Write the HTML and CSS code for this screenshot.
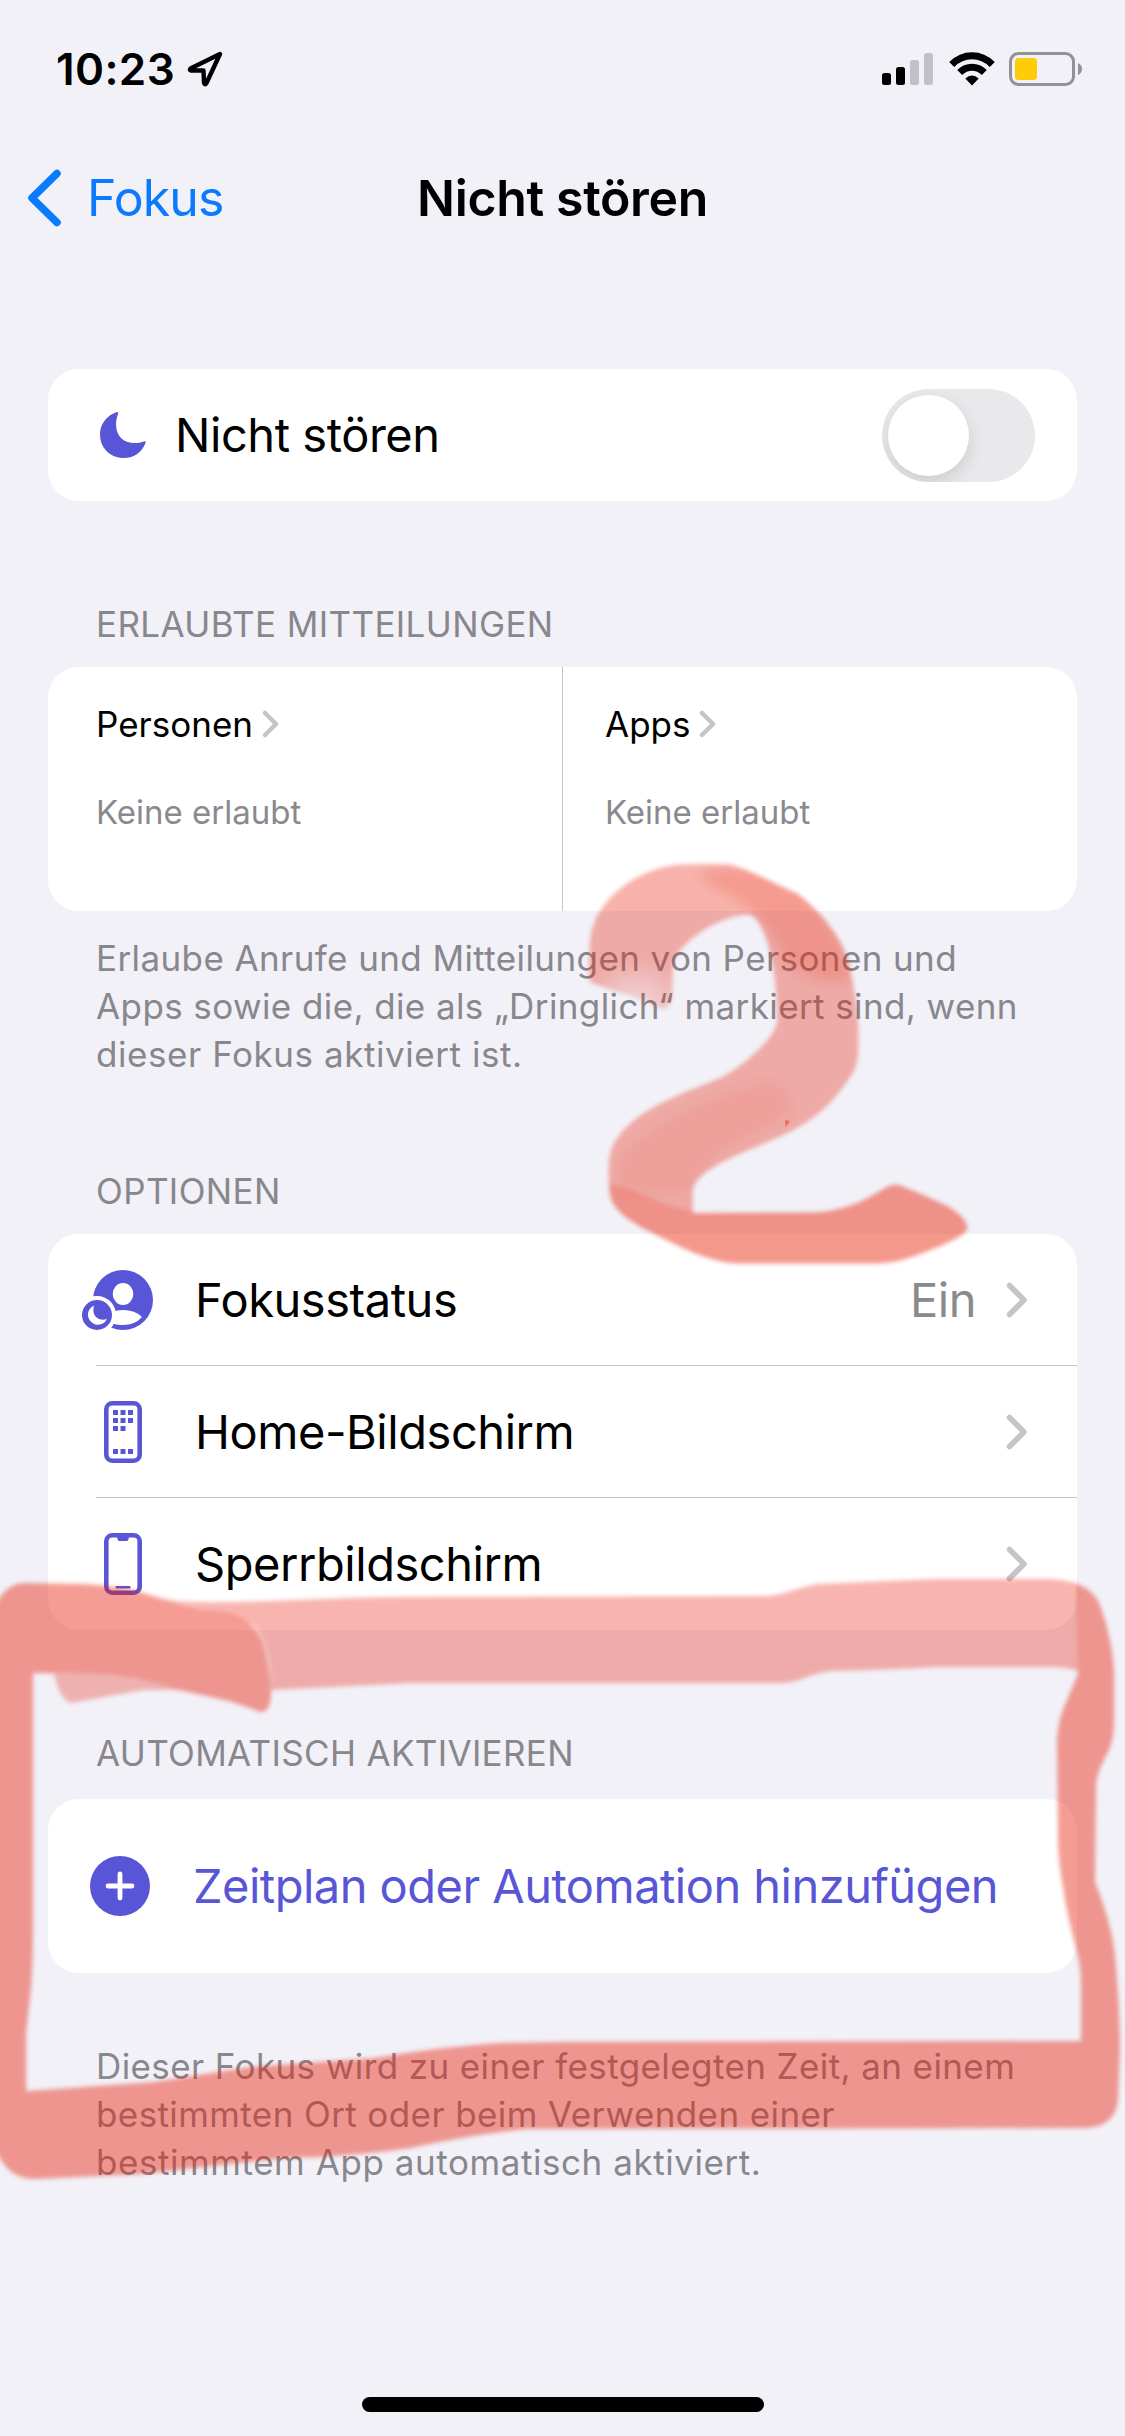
FILE: index.html
```html
<!DOCTYPE html>
<html lang="de">
<head>
<meta charset="utf-8">
<title>Nicht stören</title>
<link rel="stylesheet" href="styles.css">
</head>
<body>
<div class="screen">
  <header class="status">
    <span class="time">10:23</span>
    <svg class="location" width="36" height="36" viewBox="0 0 36 36"><path d="M33 3 3.500 17.500Q2 19 4 19.500H16.500L17 32Q18 34.500 19.500 32Z" fill="none" stroke="#000" stroke-width="4.400" stroke-linejoin="round"/></svg>
    <span class="status-icons">
      <svg width="52" height="34" viewBox="0 0 52 34"><rect y="21" width="9" height="12" rx="2.500"/><rect x="14" y="15" width="9" height="18" rx="2.500"/><rect x="28" y="8" width="9" height="25" rx="2.500" fill="#c1c0c6"/><rect x="42" y="1" width="9" height="32" rx="2.500" fill="#c1c0c6"/></svg>
      <svg class="wifi" width="46" height="34" viewBox="0 0 46 34"><g fill="none" stroke="#000" stroke-width="7"><path d="M2.700 12.500Q11.500 3.700 23 3.700T43.300 12.500"/><path d="M10.700 20.500Q16 15.200 23 15.200T35.300 20.500"/></g><path d="M16.300 26.500Q23 20.500 29.700 26.500L23 33.500Z"/></svg>
      <svg class="battery" width="74" height="34" viewBox="0 0 74 34"><rect x="1.500" y="1.500" width="63" height="31" rx="8" fill="none" stroke="#929197" stroke-width="3"/><rect x="6" y="6" width="22" height="22" rx="3.500" fill="#ffcc0a"/><path d="M69 11Q73 13 73 17T69 23Z" fill="#929197"/></svg>
    </span>
  </header>
  <nav class="nav">
    <a class="back"><svg width="36" height="58" viewBox="0 0 36 58"><path d="M30 4.500 5 29 30 53.500" fill="none" stroke="#0a7aff" stroke-width="7.500" stroke-linecap="round" stroke-linejoin="round"/></svg><span>Fokus</span></a>
    <h1 class="title">Nicht stören</h1>
  </nav>
  <main>
    <section class="card row focus-row">
      <svg width="48" height="48" viewBox="0 0 48 48"><path d="M18 1C8 4 1 13 1 23C1 37 11 47 25 47C35 47 43 41 46.500 32C47 30 46 30 44.500 30.500C42 31.500 39 32 36 32C24 32 17 25 17 13C17 9 18 6 19 3C19.500 1.500 19 .800 18 1Z" fill="#5856d6"/></svg>
      <span class="label">Nicht stören</span>
      <span class="toggle"><span class="knob"></span></span>
    </section>
    <h2 class="heading">ERLAUBTE MITTEILUNGEN</h2>
    <section class="card allowed">
      <div class="cell">
        <div class="cell-title"><span>Personen</span><svg width="17" height="28" viewBox="0 0 17 28"><path d="M3 3 14 14 3 25"/></svg></div>
        <div class="cell-note">Keine erlaubt</div>
      </div>
      <div class="cell">
        <div class="cell-title"><span>Apps</span><svg width="17" height="28" viewBox="0 0 17 28"><path d="M3 3 14 14 3 25"/></svg></div>
        <div class="cell-note">Keine erlaubt</div>
      </div>
    </section>
    <p class="note">Erlaube Anrufe und Mitteilungen von Personen und<br>Apps sowie die, die als „Dringlich“ markiert sind, wenn<br><span class="note-end">dieser Fokus aktiviert ist.</span></p>
    <h2 class="heading options-heading">OPTIONEN</h2>
    <section class="card options">
      <div class="row option">
        <svg width="64" height="64" viewBox="0 0 64 64"><circle cx="33" cy="32" r="30" fill="#5856d6"/><ellipse cx="33" cy="26" rx="10.300" ry="11" fill="#fff"/><path d="M14 49Q21 42 33 42Q45 42 52 49Q45 57 33 57Q22 57 14 52Z" fill="#fff"/><circle cx="7" cy="47" r="19" fill="#fff"/><circle cx="7" cy="47" r="15" fill="#5856d6"/><path d="M4 37.500A10 10 0 1 0 17 51Q10 53 6 49Q2 45 4 37.500Z" fill="#fff"/></svg>
        <span class="label">Fokusstatus</span><span class="value">Ein</span>
        <svg class="chev" width="22" height="36" viewBox="0 0 22 36"><path d="M3.500 3.500 18 18 3.500 32.500"/></svg>
      </div>
      <div class="row option">
        <svg width="64" height="64" viewBox="0 0 64 64" fill="#5856d6"><rect x="16.300" y="3.300" width="33.400" height="57.400" rx="6" fill="none" stroke="#5856d6" stroke-width="4.600"/><path d="M23 10h5v5h-5zM30.500 10h5v5h-5zM38 10h5v5h-5zM23 18h5v5h-5zM30.500 18h5v5h-5zM38 18h5v5h-5zM23 26h5v5h-5zM30.500 26h5v5h-5zM23 49h5v5h-5zM30.500 49h5v5h-5zM38 49h5v5h-5z"/></svg>
        <span class="label">Home-Bildschirm</span>
        <svg class="chev" width="22" height="36" viewBox="0 0 22 36"><path d="M3.500 3.500 18 18 3.500 32.500"/></svg>
      </div>
      <div class="row option">
        <svg width="64" height="64" viewBox="0 0 64 64" fill="#5856d6"><rect x="16.300" y="3.300" width="33.400" height="57.400" rx="6" fill="none" stroke="#5856d6" stroke-width="4.600"/><path d="M26 4h14Q38.500 5 38.500 7Q38.500 9 36.500 9H29.500Q27.500 9 27.500 7Q27.500 5 26 4Z"/><rect x="25.500" y="54" width="15" height="2.500" rx="1.200"/></svg>
        <span class="label">Sperrbildschirm</span>
        <svg class="chev" width="22" height="36" viewBox="0 0 22 36"><path d="M3.500 3.500 18 18 3.500 32.500"/></svg>
      </div>
    </section>
    <h2 class="heading auto-heading">AUTOMATISCH AKTIVIEREN</h2>
    <section class="card row add-row">
      <svg width="60" height="60" viewBox="0 0 60 60"><circle cx="30" cy="30" r="30" fill="#5856d6"/><path d="M30 18V42M18 30H42" stroke="#fff" stroke-width="4.800" stroke-linecap="round"/></svg>
      <span class="label">Zeitplan oder Automation hinzufügen</span>
    </section>
    <p class="note auto-note">Dieser Fokus wird zu einer festgelegten Zeit, an einem<br>bestimmten Ort oder beim Verwenden einer<br><span class="note-end">bestimmtem App automatisch aktiviert.</span></p>
  </main>
  <div class="home-indicator"></div>

  <!-- translucent red marker drawn over the screen -->
  <svg class="marker" width="1125" height="2436" viewBox="0 0 1125 2436" color-interpolation-filters="sRGB">
    <defs>
      <filter id="soft" x="-5%" y="-5%" width="110%" height="110%"><feGaussianBlur stdDeviation="2"/></filter>
      <filter id="edge" x="-10%" y="-10%" width="120%" height="120%"><feGaussianBlur stdDeviation="7"/></filter>
      <filter id="blend" x="-30%" y="-30%" width="160%" height="160%"><feGaussianBlur stdDeviation="18"/></filter>
      <path id="twoShape" d="M150 320C150 180 300 75 440 73L560 73C600 75 700 130 770 160C850 220 920 310 930 390C950 470 957 550 955 620C955 680 940 700 910 740C860 810 800 850 740 880C640 930 470 980 458 1050L458 1120L830 1118C920 1112 980 1080 1040 1042Q1070 1025 1100 1045C1140 1060 1180 1080 1220 1098C1260 1120 1282 1145 1282 1165C1275 1185 1240 1200 1200 1218C1130 1245 1080 1270 1000 1270L590 1270C510 1265 430 1225 380 1200C300 1160 215 1120 210 1060C203 1000 200 930 235 890C300 800 430 760 550 710C620 670 710 590 712 540C712 440 700 370 680 300C665 260 650 225 625 224C540 225 430 300 400 360C395 400 400 440 395 470C390 500 375 515 350 500C300 470 200 450 150 425C145 390 148 350 150 320Z"/>
      <clipPath id="two"><use href="#twoShape"/></clipPath>
      <radialGradient id="tip" gradientUnits="userSpaceOnUse" cx="290" cy="520" r="170"><stop offset="0" stop-color="#444"/><stop offset="1" stop-color="#fff"/></radialGradient>
      <mask id="fade" maskUnits="userSpaceOnUse" x="0" y="0" width="1400" height="1400"><rect width="1400" height="1400" fill="url(#tip)"/></mask>
    </defs>
    <g transform="translate(540 840) scale(.33333)">
      <g mask="url(#fade)"><use href="#twoShape" fill="#e9200a" fill-opacity=".34" filter="url(#edge)"/></g>
      <g filter="url(#edge)"><g clip-path="url(#two)" fill="#ee2408">
        <path d="M470 100Q640 50 800 170Q900 270 940 420Q820 440 730 360Q670 200 520 140Z" fill-opacity=".17" filter="url(#blend)"/>
        <path d="M240 950Q400 800 640 740Q760 700 740 830Q480 940 450 1060L240 1060Z" fill-opacity=".08" filter="url(#blend)"/>
        <path d="M200 1030C300 1050 400 1115 458 1110L900 1100L1060 1030L1290 1110L1290 1220L1000 1300L590 1300L380 1230L180 1110Z" fill-opacity=".19"/>
      </g></g>
      <path d="M735 840L750 843L737 862Z" fill="#e8352c" fill-opacity=".55"/>
    </g>
    <g filter="url(#soft)" fill="#e91f0c">
      <path fill-opacity=".33" d="M143 1594Q180 1604 221 1602C300 1601 340 1597 411 1597L769 1596C788 1594 800 1586 819 1584Q880 1581 938 1579L1050 1579Q1068 1580 1078 1584V1671Q1066 1667 1050 1667L938 1667Q880 1670 830 1671C810 1674 800 1682 783 1683L411 1683L271 1690Q271 1665 266 1650Q262 1630 250 1624Q235 1616 215 1611Q170 1600 143 1594Z"/>
      <path fill-opacity=".3" d="M54 1674L96 1674Q140 1678 179 1690L143 1690Q110 1696 71 1703Q60 1700 54 1674Z"/>
      <path fill-opacity=".44" d="M-8 1614Q2 1584 24 1583L82 1584Q120 1586 143 1593Q180 1605 221 1612Q252 1618 262 1640Q270 1665 271 1692Q271 1713 260 1712Q245 1706 229 1701L179 1690Q135 1676 96 1674L33 1673L33 1927Q33 1960 31 1989L26 2033L26 2091L71 2088L154 2082Q200 2075 250 2067L375 2058Q440 2047 500 2043L560 2042L1081 2041L1081 1989Q1081 1965 1077 1952Q1067 1915 1063 1887Q1058 1860 1058 1838L1057 1740Q1058 1722 1064 1707L1078 1674L1077 1584Q1094 1590 1100 1605Q1112 1638 1114 1670L1114 1725Q1113 1745 1105 1758Q1097 1772 1096 1785L1095 1882Q1112 1925 1115 1956Q1120 2010 1120 2050L1118 2099Q1116 2127 1085 2128L560 2129L525 2129Q465 2136 411 2148Q350 2157 286 2158Q215 2165 143 2174L36 2179Q4 2180 -8 2140Z"/>
    </g>
  </svg>
</div>
</body>
</html>
```
FILE: styles.css
```css
* { box-sizing: border-box; margin: 0; padding: 0; }
body { background: #f2f1f7; font-family: Inter, "Liberation Sans", sans-serif; color: #000; }
svg { display: block; flex: none; }
.screen { position: relative; width: 1125px; height: 2436px; overflow: hidden; display: flex; flex-direction: column; }
.status { height: 138px; display: flex; align-items: center; padding: 0 42px 0 56px; }
.time { font-size: 44px; font-weight: 600; letter-spacing: .4px; }
.location { margin-left: 12px; }
.status-icons { display: flex; margin-left: auto; }
.wifi { margin-left: 15px; }
.battery { margin-left: 14px; }
.nav { height: 120px; display: grid; grid-template-columns: 1fr auto 1fr; align-items: center; font-size: 50px; }
.back { display: flex; align-items: center; gap: 24px; padding-left: 27px; color: #0a7aff; letter-spacing: -.9px; }
.title { font-size: 50px; font-weight: 600; letter-spacing: -.35px; }
main { padding: 111px 48px 0; }
.card { background: #fff; border-radius: 31px; }
.row { display: flex; align-items: center; font-size: 47px; letter-spacing: -.45px; }
.label, .value { padding-bottom: 2px; }
.focus-row { height: 132px; padding: 0 42px 0 51px; }
.focus-row .label { margin-left: 28px; }
.toggle { margin-left: auto; width: 153px; height: 93px; border-radius: 47px; background: #e9e9eb; padding: 6px; overflow: hidden; }
.knob { display: block; width: 81px; height: 81px; border-radius: 50%; background: #fff; box-shadow: 0 7px 18px rgba(0,0,0,.12); }
.heading { margin: 99px 0 19px 48px; font-size: 35px; font-weight: 400; line-height: 48px; letter-spacing: .38px; color: #88878d; }
.allowed { height: 244px; display: grid; grid-template-columns: 514px 1fr; }
.cell { padding: 33px 0 0 48px; }
.cell + .cell { border-left: 1px solid #c6c6c8; padding-left: 42px; }
.cell-title { display: flex; align-items: center; gap: 9px; font-size: 35px; line-height: 48px; }
.cell-title path, .chev path { fill: none; stroke: #c5c5c7; stroke-width: 4.5; stroke-linecap: round; stroke-linejoin: round; }
.chev path { stroke-width: 5.5; }
.cell-note { margin-top: 40px; font-size: 33px; line-height: 48px; color: #8a8a8e; }
.note { margin: 23px 0 0 48px; font-size: 35px; line-height: 48px; letter-spacing: .4px; color: #88878d; white-space: nowrap; }
.note-end { letter-spacing: .56px; }
.options-heading { margin-top: 89px; }
.option { height: 132px; padding: 0 49px 0 42px; position: relative; }
.option + .option::before { content: ""; position: absolute; left: 48px; right: 0; top: -1px; height: 1px; background: #c6c6c8; }
.option svg { overflow: visible; }
.option .label { margin-left: 41px; margin-right: auto; }
.value { color: #8a8a8e; margin-right: 30px; }
.auto-heading { margin-bottom: 22px; letter-spacing: .33px; }
.add-row { height: 174px; padding-left: 42px; color: #5856d6; letter-spacing: -.52px; }
.add-row .label { margin-left: 43px; }
.auto-note { margin-top: 69px; }
.home-indicator { width: 402px; height: 15px; border-radius: 8px; background: #000; margin: auto auto 24px; }
.marker { position: absolute; left: 0; top: 0; pointer-events: none; }
```
